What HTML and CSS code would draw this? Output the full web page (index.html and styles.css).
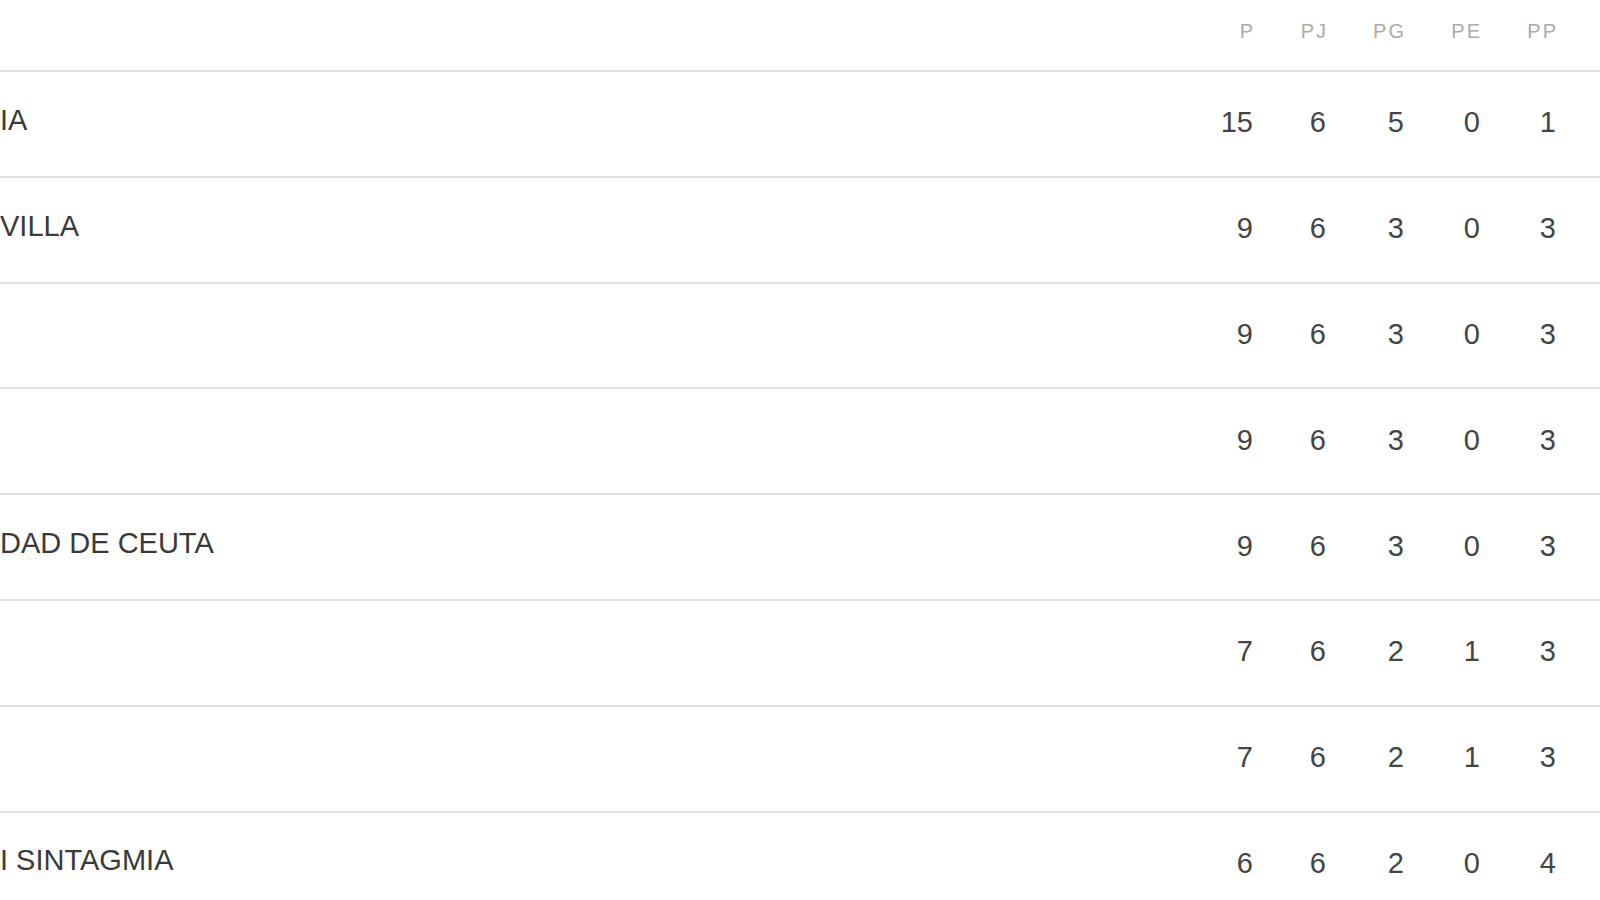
FILE: index.html
```html
<!DOCTYPE html>
<html lang="es">
<head>
<meta charset="utf-8">
<title>Clasificación</title>
<link rel="stylesheet" href="styles.css">
</head>
<body>
<table class="standings">
  <colgroup>
    <col class="col-team">
    <col class="col-p">
    <col class="col-pj">
    <col class="col-pg">
    <col class="col-pe">
    <col class="col-pp">
  </colgroup>
  <thead>
    <tr class="head">
      <th class="team"></th>
      <th class="stat"><span>P</span></th>
      <th class="stat"><span>PJ</span></th>
      <th class="stat"><span>PG</span></th>
      <th class="stat"><span>PE</span></th>
      <th class="stat last"><span>PP</span></th>
    </tr>
  </thead>
  <tbody>
    <tr><td class="team">IA</td><td class="stat">15</td><td class="stat">6</td><td class="stat">5</td><td class="stat">0</td><td class="stat last">1</td></tr>
    <tr><td class="team">VILLA</td><td class="stat">9</td><td class="stat">6</td><td class="stat">3</td><td class="stat">0</td><td class="stat last">3</td></tr>
    <tr><td class="team"></td><td class="stat">9</td><td class="stat">6</td><td class="stat">3</td><td class="stat">0</td><td class="stat last">3</td></tr>
    <tr><td class="team"></td><td class="stat">9</td><td class="stat">6</td><td class="stat">3</td><td class="stat">0</td><td class="stat last">3</td></tr>
    <tr><td class="team">DAD DE CEUTA</td><td class="stat">9</td><td class="stat">6</td><td class="stat">3</td><td class="stat">0</td><td class="stat last">3</td></tr>
    <tr><td class="team"></td><td class="stat">7</td><td class="stat">6</td><td class="stat">2</td><td class="stat">1</td><td class="stat last">3</td></tr>
    <tr><td class="team"></td><td class="stat">7</td><td class="stat">6</td><td class="stat">2</td><td class="stat">1</td><td class="stat last">3</td></tr>
    <tr><td class="team">I SINTAGMIA</td><td class="stat">6</td><td class="stat">6</td><td class="stat">2</td><td class="stat">0</td><td class="stat last">4</td></tr>
  </tbody>
</table>
</body>
</html>
```
FILE: styles.css
```css
html, body {
  margin: 0;
  padding: 0;
  background: #ffffff;
  overflow: hidden;
  height: 100%;
}

body {
  font-family: "Liberation Sans", Arial, sans-serif;
  color: #3a3a3a;
}

.standings {
  border-collapse: collapse;
  table-layout: fixed;
  width: 100%;
}

.col-team {
  width: 1180px;
}

.col-p {
  width: 73px;
}

.col-pj {
  width: 73px;
}

.col-pg {
  width: 78px;
}

.col-pe {
  width: 76px;
}

.col-pp {
  width: 120px;
}

.standings th,
.standings td {
  padding: 0;
  white-space: nowrap;
}

.head th {
  height: 71px;
  box-sizing: border-box;
  padding-bottom: 8px;
  font-size: 20px;
  font-weight: normal;
  color: #ababab;
  letter-spacing: 2px;
  vertical-align: middle;
}

.head th.stat span {
  margin-right: -2px;
}

.standings thead tr,
.standings tbody tr {
  border-bottom: 2px solid #e1e1e1;
}

.standings tbody td {
  height: 105.8px;
  box-sizing: border-box;
  padding-bottom: 2px;
  vertical-align: middle;
  font-size: 29px;
}

.team {
  text-align: left;
}

.standings td.team {
  color: #3a3a3a;
  padding-bottom: 7px;
}

.stat {
  text-align: right;
}

.standings .stat.last {
  padding-right: 44px;
}

td.stat {
  color: #444444;
}
```
